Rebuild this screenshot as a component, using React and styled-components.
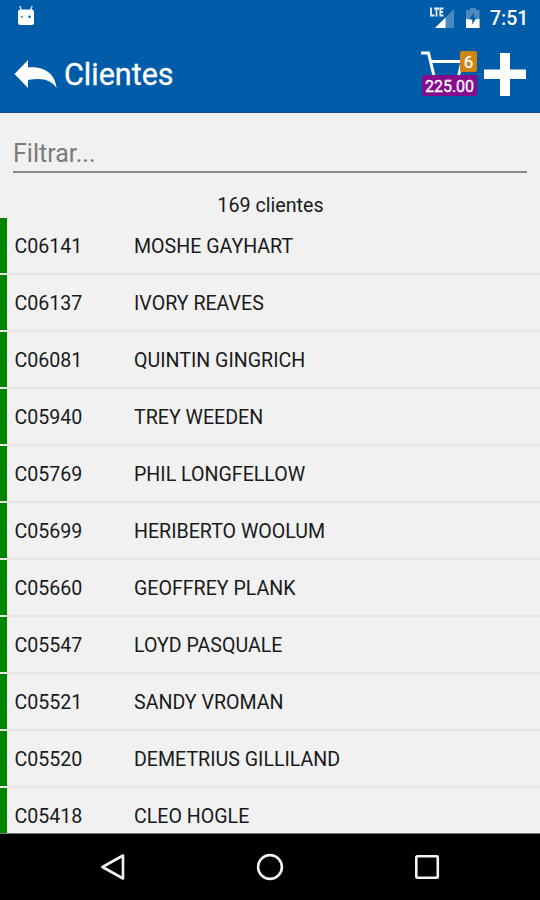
import React from "react";
import { useState } from "react";
import styled, { createGlobalStyle } from "styled-components";

const clients = [
    { code: 'C06141', name: 'MOSHE GAYHART' },
    { code: 'C06137', name: 'IVORY REAVES' },
    { code: 'C06081', name: 'QUINTIN GINGRICH' },
    { code: 'C05940', name: 'TREY WEEDEN' },
    { code: 'C05769', name: 'PHIL LONGFELLOW' },
    { code: 'C05699', name: 'HERIBERTO WOOLUM' },
    { code: 'C05660', name: 'GEOFFREY PLANK' },
    { code: 'C05547', name: 'LOYD PASQUALE' },
    { code: 'C05521', name: 'SANDY VROMAN' },
    { code: 'C05520', name: 'DEMETRIUS GILLILAND' },
    { code: 'C05418', name: 'CLEO HOGLE' },
]

function StatusIcons(){
    return(
        <StatusRight>
            <svg width="28" height="22" viewBox="0 0 28 22">
                <path d="M26 2V21H7Z" fill="#4a8ac0" />
                <path d="M17.500 10.500V21H7Z" fill="#fff" />
                <path d="M3 .500V8.500H6.500M6 1.500H11M8.500 1.500V9.500M15.500 1.500H12.300V8.500H15.500M12.300 5H15" fill="none" stroke="#e4eef8" strokeWidth="1.800" />
            </svg>
            <BatteryIcon width="16" height="22" viewBox="0 0 16 22">
                <path d="M5 1H11V3H14.500V21H1V3H5Z" fill="#4a8ac0" />
                <path d="M1 12H14.500V21H1Z" fill="#fff" />
                <path d="M9 5.500L4 12.500H7.300V17.500L11.500 10.700H9Z" fill="#005ca9" />
            </BatteryIcon>
            <Clock>7:51</Clock>
        </StatusRight>
    )
}

function App(){
    const [filter, setFilter] = useState('')
    const visible = clients.filter(({ code, name }) =>
        `${code} ${name}`.toLowerCase().includes(filter.toLowerCase())
    )
    return(
        <>
            <GlobalStyle />
            <Screen>
                <StatusBar>
                    <svg width="18" height="20" viewBox="0 0 18 20">
                        <path d="M4.500 5L3 0M13.500 5L15 0" stroke="#c5dcf0" strokeWidth="1.500" />
                        <rect x="1" y="3.500" width="16" height="15.500" rx="2.500" fill="#fff" />
                        <circle cx="5" cy="10.800" r=".9" fill="#005ca9" />
                        <circle cx="12.500" cy="10.800" r="1.200" fill="#005ca9" />
                    </svg>
                    <StatusIcons />
                </StatusBar>
                <Toolbar>
                    <IconButton aria-label="Volver">
                        <svg width="44" height="30" viewBox="0 0 44 30">
                            <path d="M.500 15L14 1V8.500C28 7 41 13 42.500 29C37 20.500 28 18.500 14 21V29Z" fill="#fff" />
                        </svg>
                    </IconButton>
                    <Title>Clientes</Title>
                    <Cart>
                        <svg width="56" height="30" viewBox="0 0 56 30">
                            <path d="M0 2H7.500L13 25M10 10.500H41L37.500 25" fill="none" stroke="#fff" strokeWidth="3" />
                        </svg>
                        <Count>6</Count>
                        <Total>225.00</Total>
                    </Cart>
                    <IconButton aria-label="Agregar">
                        <svg width="42" height="43" viewBox="0 0 42 43">
                            <path d="M16 0H26V16.500H42V26H26V43H16V26H0V16.500H16Z" fill="#fff" />
                        </svg>
                    </IconButton>
                </Toolbar>
                <FilterInput
                    type="text"
                    value={filter}
                    placeholder="Filtrar..."
                    onChange={e => setFilter(e.target.value)}
                />
                <Summary>169 clientes</Summary>
                <List>
                    {visible.map(({ code, name }) => (
                        <Row key={code}>
                            <Code>{code}</Code>
                            <Name>{name}</Name>
                        </Row>
                    ))}
                </List>
                <NavBar>
                    <svg width="26" height="28" viewBox="0 0 26 28">
                        <path d="M2.500 14L23 2.500V25.500Z" fill="none" stroke="#f2f2f2" strokeWidth="2.600" strokeLinejoin="round" />
                    </svg>
                    <svg width="28" height="28" viewBox="0 0 28 28">
                        <circle cx="14" cy="14" r="11.900" fill="none" stroke="#f2f2f2" strokeWidth="2.600" />
                    </svg>
                    <svg width="26" height="28" viewBox="0 0 26 28">
                        <rect x="2.300" y="3.300" width="21.500" height="21.500" rx="1" fill="none" stroke="#f2f2f2" strokeWidth="2.600" />
                    </svg>
                </NavBar>
            </Screen>
        </>
    )
}

const GlobalStyle = createGlobalStyle`
    *{
        box-sizing: border-box;
    }
    body{
        margin: 0;
        background: #f1f1f1;
        font-family: Roboto, sans-serif;
    }
    svg{
        display: block;
        flex-shrink: 0;
    }
`;
const Screen = styled.div`
    display: flex;
    flex-direction: column;
    width: 540px;
    height: 900px;
    overflow: hidden;
    background: #f1f1f1;
    color: #1a1a1a;
`;
const StatusBar = styled.div`
    display: flex;
    justify-content: space-between;
    align-items: center;
    height: 36px;
    flex-shrink: 0;
    padding: 0 12px 4px 17px;
    background: #005ca9;
`;
const StatusRight = styled.div`
    display: flex;
    align-items: center;
    padding-top: 3px;
`;
const BatteryIcon = styled.svg`
    margin-left: 9px;
`;
const Clock = styled.span`
    width: 38px;
    margin-left: 9px;
    padding-top: 2px;
    color: #fff;
    font-size: 19.5px;
    font-weight: 500;
    line-height: 22px;
    white-space: nowrap;
`;
const Toolbar = styled.header`
    display: flex;
    align-items: center;
    height: 77px;
    flex-shrink: 0;
    padding: 0 14px;
    background: #005ca9;
    border-bottom: 1px solid #174b91;
`;
const IconButton = styled.button`
    padding: 0;
    border: none;
    background: transparent;
`;
const Title = styled.h1`
    flex: 1;
    margin: 2px 0 0 6px;
    color: #fff;
    font-size: 30.5px;
    font-weight: 400;
    line-height: 36px;
    -webkit-text-stroke: 0.3px #fff;
`;
const Cart = styled.div`
    position: relative;
    width: 56px;
    height: 46px;
    margin-right: 7px;
`;
const Badge = styled.span`
    position: absolute;
    display: flex;
    justify-content: center;
    align-items: center;
    border-radius: 2px;
    color: #fff;
    font-weight: 400;
    -webkit-text-stroke: 0.3px #fff;
`;
const Count = styled(Badge)`
    right: 0;
    top: 0;
    width: 17px;
    height: 21px;
    background: #d18412;
    font-size: 17px;
`;
const Total = styled(Badge)`
    right: 0;
    bottom: 1px;
    width: 55px;
    height: 21px;
    padding-top: 1px;
    background: #850c8d;
    font-size: 16px;
`;
const FilterInput = styled.input`
    height: 43px;
    flex-shrink: 0;
    margin: 17px 13px 0;
    padding: 5px 0 0;
    border: none;
    border-bottom: 2px solid #8b8888;
    border-radius: 0;
    outline: none;
    background: transparent;
    color: #222;
    font-family: inherit;
    font-size: 25px;
    &::placeholder{
        color: #7b7b7b;
        opacity: 1;
    }
`;
const Summary = styled.div`
    height: 45px;
    flex-shrink: 0;
    padding: 21px 0 0 1px;
    font-size: 19.7px;
    line-height: 24px;
    text-align: center;
`;
const List = styled.div`
    flex: 1;
    min-height: 0;
    overflow: hidden;
`;
const Row = styled.div`
    display: flex;
    align-items: center;
    height: 57px;
    padding: 2px 0 0 7px;
    border-bottom: 2px solid #e5e6e5;
    background: linear-gradient(to right, #008500 7.5px, transparent 7.5px) padding-box;
    font-size: 19.6px;
`;
const Code = styled.span`
    width: 120px;
    padding-left: 7.5px;
`;
const Name = styled.span`
    padding-left: 7px;
`;
const NavBar = styled.nav`
    display: flex;
    justify-content: space-between;
    align-items: center;
    height: 67px;
    flex-shrink: 0;
    padding: 0 100px 0 100px;
    border-top: 1px solid #777;
    background: #000;
`;
export default App
